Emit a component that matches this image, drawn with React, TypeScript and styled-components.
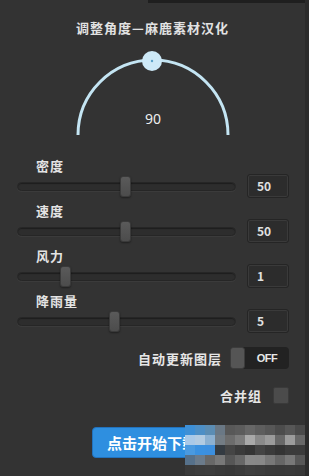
import React from "react";
import styled, { createGlobalStyle } from "styled-components";

const GlobalStyle = createGlobalStyle`
  html, body { margin: 0; padding: 0; background: #2c2c2c; }
  body { font-family: "Noto Sans CJK SC", "Noto Sans", "Liberation Sans", sans-serif; }
  * { box-sizing: border-box; }
`;

const Panel = styled.div`
  position: relative;
  width: 309px;
  height: 476px;
  background: #333333;
  border-right: 4px solid #2b2b2b;
  display: flex;
  flex-direction: column;
  overflow: hidden;
`;

const TopStrip = styled.div`
  display: flex;
  height: 3px;
`;

const StripGap = styled.div`
  width: 148px;
`;

const StripDark = styled.div`
  flex: 1;
  background: #1f1f1f;
`;

const Title = styled.div`
  margin-top: 15px;
  height: 20px;
  line-height: 20px;
  text-align: center;
  font-size: 13px;
  font-weight: 700;
  letter-spacing: 1px;
  color: #e2e2e2;
`;

const DialWrap = styled.div`
  margin-top: 12px;
  display: flex;
  justify-content: center;
  padding-left: 1px;
`;

const Sliders = styled.div`
  margin-top: 13px;
  padding: 0 16px 0 17px;
  display: flex;
  flex-direction: column;
  gap: 5px;
`;

const SliderBlock = styled.div`
  display: flex;
  flex-direction: column;
`;

const Label = styled.div`
  height: 16px;
  line-height: 16px;
  padding-left: 19px;
  font-size: 13px;
  font-weight: 700;
  letter-spacing: 1px;
  color: #e4e4e4;
`;

const ControlRow = styled.div`
  height: 24px;
  display: flex;
  align-items: center;
  gap: 11px;
`;

const Track = styled.div`
  position: relative;
  flex: 1;
  height: 9px;
  border-radius: 5px;
  background: #2d2d2d;
  border: 1px solid #262626;
  box-shadow: inset 0 1px 1px rgba(0, 0, 0, 0.35), 0 1px 0 rgba(255, 255, 255, 0.04);
`;

const Thumb = styled.div<{ $pos: number }>`
  position: absolute;
  top: 50%;
  left: ${(p) => p.$pos}px;
  width: 11px;
  height: 21px;
  margin-top: -10.5px;
  border-radius: 3px;
  background: linear-gradient(#5a5a5a, #4c4c4c);
  border: 1px solid #3a3a3a;
  box-shadow: 0 1px 2px rgba(0, 0, 0, 0.4);
`;

const ValueBox = styled.div`
  width: 42px;
  height: 24px;
  border-radius: 3px;
  background: #2c2c2c;
  border: 1px solid #252525;
  box-shadow: inset 0 0 0 1px #3a3a3a;
  padding-left: 9px;
  line-height: 22px;
  font-size: 12px;
  font-weight: 700;
  color: #e0e0e0;
`;

const OptionRow = styled.div<{ $top: number; $gap: number }>`
  margin-top: ${(p) => p.$top}px;
  padding-right: 16px;
  display: flex;
  justify-content: flex-end;
  align-items: center;
  gap: ${(p) => p.$gap}px;
`;

const OptionText = styled.span`
  font-size: 13px;
  font-weight: 700;
  letter-spacing: 1px;
  color: #e6e6e6;
`;

const Toggle = styled.div`
  width: 59px;
  height: 22px;
  border-radius: 4px;
  background: #222222;
  display: flex;
  align-items: center;
`;

const ToggleKnob = styled.div`
  width: 15px;
  height: 22px;
  border-radius: 3px;
  background: #555555;
  border: 1px solid #3c3c3c;
`;

const ToggleText = styled.span`
  flex: 1;
  text-align: center;
  font-family: "Liberation Sans", "Noto Sans", sans-serif;
  font-size: 11px;
  font-weight: 700;
  letter-spacing: -0.5px;
  color: #e8e8e8;
`;

const Checkbox = styled.div`
  width: 16px;
  height: 17px;
  border-radius: 2px;
  background: #4b4b4b;
  border: 1px solid #3a3a3a;
`;

const ButtonRow = styled.div`
  margin-top: 22px;
  display: flex;
  padding-left: 92px;
`;

const StartButton = styled.button`
  width: 124px;
  height: 31px;
  border-radius: 4px;
  border: 1px solid #2272bd;
  background: #2e8fe0;
  color: #ffffff;
  font-family: "Noto Sans CJK SC", sans-serif;
  font-size: 15px;
  font-weight: 700;
  text-align: left;
  padding: 0 0 0 14px;
  line-height: 29px;
`;

const Mosaic = styled.div`
  position: absolute;
  left: 185px;
  top: 425px;
  display: grid;
  grid-template-columns: repeat(12, 10px);
  grid-auto-rows: 10px;
`;

const Cell = styled.div<{ $c: string }>`
  background: ${(p) => p.$c};
`;

const mosaicRows: string[][] = [
  ["#3d8fd6", "#4d8fc6", "#5b8db4", "#6a7885", "#585858", "#5c5c5c", "#676767", "#5e5e5e", "#575757", "#4c4c4c", "#575757", "#4a4a4a"],
  ["#a9c9e8", "#b2cbe2", "#8cb1d2", "#737c84", "#6c6c6c", "#7c7c7c", "#a9a9a9", "#8a8a8a", "#9b9b9b", "#686868", "#9c9c9c", "#686868"],
  ["#4a9ae0", "#3b91e0", "#3c8fdf", "#343b42", "#454545", "#3b3b3b", "#353535", "#444444", "#3b3b3b", "#343434", "#3b3b3b", "#3b3b3b"],
  ["#56718b", "#6b7b8b", "#686868", "#787878", "#565656", "#676767", "#898989", "#888888", "#787878", "#666666", "#787878", "#575757"],
  ["#3a3a3a", "#3c3c3c", "#3d3d3d", "#3a3a3a", "#383838", "#3b3b3b", "#3f3f3f", "#3d3d3d", "#3a3a3a", "#393939", "#3a3a3a", "#383838"],
];

type SliderData = { label: string; value: string; thumb: number };

const sliders: SliderData[] = [
  { label: "密度", value: "50", thumb: 102 },
  { label: "速度", value: "50", thumb: 102 },
  { label: "风力", value: "1", thumb: 42 },
  { label: "降雨量", value: "5", thumb: 91 },
];

const Dial: React.FC<{ value: number }> = ({ value }) => {
  const cx = 85;
  const cy = 85;
  const r = 75;
  return (
    <svg width="170" height="95" viewBox="0 0 170 95">
      <path
        d={`M ${cx - r} ${cy} A ${r} ${r} 0 0 1 ${cx + r} ${cy}`}
        fill="none"
        stroke="#c4e5f3"
        strokeWidth="3"
      />
      <circle cx={cx - 1} cy={cy - r + 1} r="10" fill="#cde9f7" />
      <circle cx={cx - 1} cy={cy - r + 1} r="1.2" fill="#5aa0c8" />
      <text
        x={cx}
        y={74}
        textAnchor="middle"
        fontFamily="Noto Sans, Liberation Sans, sans-serif"
        fontSize="14"
        fill="#eeeeee"
      >
        {value}
      </text>
    </svg>
  );
};

export default function App() {
  return (
    <>
      <GlobalStyle />
      <Panel>
        <TopStrip>
          <StripGap />
          <StripDark />
        </TopStrip>
        <Title>调整角度—麻鹿素材汉化</Title>
        <DialWrap>
          <Dial value={90} />
        </DialWrap>
        <Sliders>
          {sliders.map((s) => (
            <SliderBlock key={s.label}>
              <Label>{s.label}</Label>
              <ControlRow>
                <Track>
                  <Thumb $pos={s.thumb} />
                </Track>
                <ValueBox>{s.value}</ValueBox>
              </ControlRow>
            </SliderBlock>
          ))}
        </Sliders>
        <OptionRow $top={14} $gap={8}>
          <OptionText>自动更新图层</OptionText>
          <Toggle>
            <ToggleKnob />
            <ToggleText>OFF</ToggleText>
          </Toggle>
        </OptionRow>
        <OptionRow $top={17} $gap={11}>
          <OptionText>合并组</OptionText>
          <Checkbox />
        </OptionRow>
        <ButtonRow>
          <StartButton>点击开始下载</StartButton>
        </ButtonRow>
        <Mosaic>
          {mosaicRows.flatMap((row, ri) =>
            row.map((c, ci) => <Cell key={`${ri}-${ci}`} $c={c} />)
          )}
        </Mosaic>
      </Panel>
    </>
  );
}
